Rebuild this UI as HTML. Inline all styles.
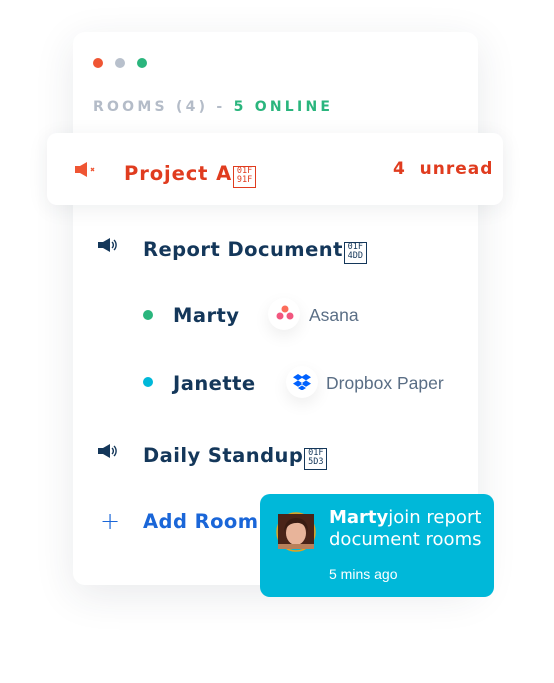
<!DOCTYPE html>
<html><head><meta charset="utf-8"><style>
*{margin:0;padding:0;box-sizing:border-box}
body{width:554px;height:683px;background:#fff;position:relative;overflow:hidden;font-family:"DejaVu Sans","Liberation Sans",sans-serif}
.card{position:absolute;left:73px;top:32px;width:405px;height:553px;background:#fff;border-radius:12px;box-shadow:0 10px 40px rgba(40,50,70,.10)}
.dot{position:absolute;top:58px;width:10px;height:10px;border-radius:50%}
.hdr{position:absolute;left:93px;top:99px;font-size:14px;font-weight:bold;letter-spacing:3.25px;color:#b4bcc8;white-space:nowrap}
.hdr span{color:#2ab57d}
.hl{position:absolute;left:47px;top:133px;width:456px;height:72px;background:#fff;border-radius:10px;box-shadow:0 4px 20px rgba(40,50,70,.08)}
.t{position:absolute;font-size:19.5px;font-weight:bold;color:#14375a;letter-spacing:.45px;white-space:nowrap}
.app{position:absolute;font-family:"Liberation Sans",sans-serif;font-size:17.5px;color:#5a6e85;white-space:nowrap}
.ic{position:absolute;width:32px;height:32px;border-radius:50%;background:#fff;box-shadow:0 6px 16px rgba(0,0,0,.07)}
.notif{position:absolute;left:260px;top:494px;width:234px;height:103px;background:#00b8d9;border-radius:10px;color:#fff}
.tofu{display:inline-block;vertical-align:-2px;width:23px;height:22px;border:1.3px solid currentColor;margin-left:1px;font-family:"DejaVu Sans Mono",monospace;font-size:8.5px;font-weight:normal;line-height:9.5px;text-align:center;letter-spacing:0}
</style></head><body>
<div class="card"></div>
<div class="dot" style="left:93px;background:#ef5533"></div>
<div class="dot" style="left:115px;background:#b8c0cc"></div>
<div class="dot" style="left:137px;background:#2ab57d"></div>
<div class="hdr">ROOMS (4) - <span>5 ONLINE</span></div>

<div class="hl"></div>
<svg style="position:absolute;left:75px;top:161px" width="26" height="18" viewBox="0 0 26 18"><path d="M0 5h5l7-4v15l-7-4H0z" fill="#ef5533"/><path d="M16 7l3 3M19 7l-3 3" stroke="#ef5533" stroke-width="1.3"/></svg>
<div class="t" style="left:124px;top:162px;color:#e03c1f;letter-spacing:.9px">Project A<span class="tofu">01F<br>91F</span></div>
<div class="t" style="left:393px;top:159px;color:#e03c1f;font-size:17px;letter-spacing:1px">4&nbsp; unread</div>

<svg style="position:absolute;left:98px;top:238px" width="22" height="16" viewBox="0 0 22 16"><path d="M0 4h5l7-4v14l-7-4H0z" fill="#14375a"/><path d="M14 4a4 4 0 0 1 0 6M16 2a7 7 0 0 1 0 10" stroke="#14375a" stroke-width="1.4" fill="none"/></svg>
<div class="t" style="left:143px;top:238px">Report Document<span class="tofu">01F<br>4DD</span></div>

<div class="dot" style="left:143px;top:310px;background:#2ab57d"></div>
<div class="t" style="left:173px;top:304px">Marty</div>
<div class="ic" style="left:268px;top:298px"></div>
<svg style="position:absolute;left:276px;top:305px" width="18" height="16" viewBox="0 0 18 16"><circle cx="9" cy="4" r="3.5" fill="#fc6d5b"/><circle cx="4" cy="11" r="3.5" fill="#f2577f"/><circle cx="14" cy="11" r="3.5" fill="#f2577f"/></svg>
<div class="app" style="left:309px;top:305px">Asana</div>

<div class="dot" style="left:143px;top:377px;background:#00b8d9"></div>
<div class="t" style="left:173px;top:372px">Janette</div>
<div class="ic" style="left:286px;top:366px"></div>
<svg style="position:absolute;left:293px;top:374px" width="18" height="16" viewBox="0 0 18 16"><path d="M5 0L0 3.2 5 6.4 10 3.2zM13 0L8 3.2 13 6.4 18 3.2zM0 9.6L5 12.8 10 9.6 5 6.4zM18 9.6L13 12.8 8 9.6 13 6.4zM5 14l4 2.5 4-2.5-4-2.5z" fill="#0061fe"/></svg>
<div class="app" style="left:326px;top:373px">Dropbox Paper</div>

<svg style="position:absolute;left:98px;top:444px" width="22" height="16" viewBox="0 0 22 16"><path d="M0 4h5l7-4v14l-7-4H0z" fill="#14375a"/><path d="M14 4a4 4 0 0 1 0 6M16 2a7 7 0 0 1 0 10" stroke="#14375a" stroke-width="1.4" fill="none"/></svg>
<div class="t" style="left:143px;top:444px">Daily Standup<span class="tofu">01F<br>5D3</span></div>

<div style="position:absolute;left:100px;top:507px;font-size:24px;color:#1a66d8;font-family:'DejaVu Sans',sans-serif;font-weight:300">+</div>
<div class="t" style="left:143px;top:510px;color:#1a66d8">Add Room</div>

<div class="notif">
 <svg style="position:absolute;left:15px;top:17px" width="42" height="42" viewBox="0 0 42 42"><circle cx="21" cy="21" r="19" fill="none" stroke="#e8a21a" stroke-width="1.5"/><rect x="3" y="3" width="36" height="35" fill="#4a2418"/><ellipse cx="21" cy="22" rx="10" ry="12" fill="#e8b49a"/><path d="M9 21q1-14 12-14q12 0 12 14q-4-10-12-9q-8 0-12 9z" fill="#3a1c12"/><rect x="3" y="33" width="36" height="5" fill="#b8805a"/></svg>
 <div style="position:absolute;left:69px;top:13px;font-size:18px;line-height:22px;white-space:nowrap"><b>Marty</b>join report<br>document rooms</div>
 <div style="position:absolute;left:69px;top:72px;font-family:'Liberation Sans',sans-serif;font-size:14px">5 mins ago</div>
</div>
</body></html>
